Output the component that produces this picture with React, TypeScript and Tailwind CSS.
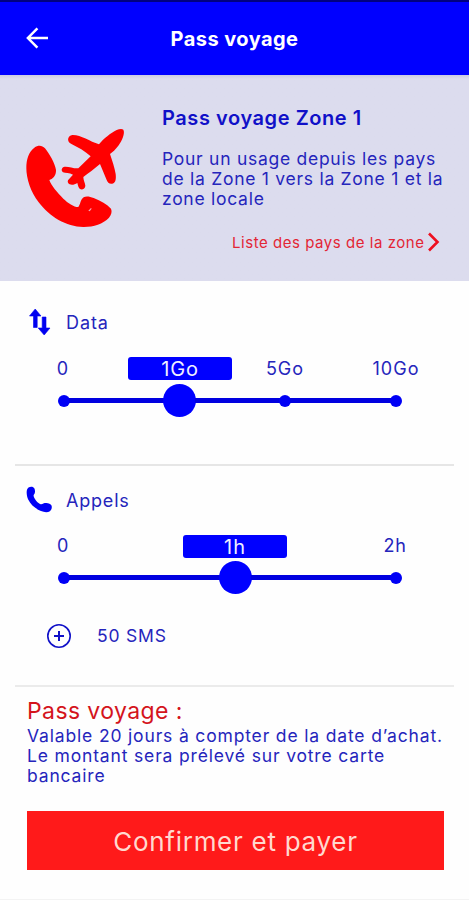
import React from "react";

function Knob() {
  return <span className="size-[33px] shrink-0 rounded-full bg-[#0000ff]" />;
}

function Dot() {
  return <span className="size-[12px] shrink-0 rounded-full bg-[#0000f5]" />;
}

function Track({ className }: { className: string }) {
  return <span className={`-mx-px h-[5px] shrink-0 bg-[#0000e0] ${className}`} />;
}

function Badge({ children, className }: { children: React.ReactNode; className: string }) {
  return (
    <span
      className={`flex h-[23px] w-[104px] shrink-0 items-center justify-center rounded-[3px] bg-[#0000ff] pt-[2px] text-[20px] leading-[23px] tracking-[0.9px] text-[#f0f0ff] ${className}`}
    >
      {children}
    </span>
  );
}

function PhonePlane() {
  return (
    <svg width="140" height="150" viewBox="0 0 420 450" className="block" fill="#ff0000">
      <path d="M73 143 C84 135 96 135 105 145 C118 162 135 189 138 210 C139 228 127 238 118 240 C124 257 142 278 160 296 C174 309 191 321 205 321 C212 312 211 299 221 292 C229 287 240 290 251 294 C272 302 291 313 303 326 C307 334 304 345 297 353 C279 372 251 380 222 381 C171 382 118 350 86 307 C62 276 49 235 49 204 C49 178 56 155 73 143 Z" />
      <path d="M235 332 L243 324 L245 326 L239 334 Z" fill="#f6a6b8" />
      <path d="M340 89 C346 99 336 123 325 137 C317 148 307 157 300 162 C307 184 314 203 317 222 C319 240 316 250 306 251 C297 252 293 247 290 240 L270 192 C253 207 235 219 220 231 C220 240 225 249 226 257 C226 265 219 269 212 268 C206 266 204 257 202 249 C194 254 186 256 179 253 C171 248 172 241 178 236 L189 224 C178 219 166 219 159 217 C152 211 155 201 164 200 C177 199 190 206 205 205 L242 169 C226 153 203 141 183 131 C169 124 173 107 187 105 C212 104 239 124 267 133 C281 116 302 99 320 90 C328 87 336 86 340 89 Z" />
    </svg>
  );
}

export default function App() {
  return (
    <main className="flex h-[900px] w-[469px] flex-col overflow-hidden bg-[#fefefe] font-['Inter','Liberation_Sans',sans-serif] text-[#2525bc]">
      <header className="grid h-[75px] shrink-0 grid-cols-[76px_1fr_76px] items-center border-t-2 border-[#000080] bg-[#0000ff] text-white">
        <svg width="24" height="24" viewBox="0 0 24 24" className="mb-[2px] ml-[25px]" fill="none" stroke="currentColor" strokeWidth="2.5">
          <path d="M12.4 2.3 L2.9 12 L12.4 21.7 M3 12 H23" />
        </svg>
        <h1 className="text-center text-[20px] leading-6 font-bold tracking-[0.45px]">Pass voyage</h1>
      </header>

      <section className="flex h-[206px] shrink-0 bg-[#dcdcee] bg-linear-to-b from-[#cbcbe2] to-[#dcdcee] to-[4px]">
        <div className="w-[162px] pt-[25px] pl-[10px]">
          <PhonePlane />
        </div>
        <div className="flex-1 pt-[31px]">
          <h2 className="text-[20px] leading-6 font-semibold tracking-[0.57px] whitespace-nowrap text-[#1010c8]">Pass voyage Zone 1</h2>
          <p className="mt-[19px] text-[17.5px] leading-5 tracking-[0.73px] whitespace-nowrap">
            Pour un usage depuis les pays
            <br />
            de la Zone 1 vers la Zone 1 et la
            <br />
            zone locale
          </p>
          <a className="mt-[24px] ml-[70px] flex h-5 items-center text-[15px] leading-5 tracking-[0.54px] whitespace-nowrap text-[#e32635]">
            Liste des pays de la zone
            <svg width="14" height="20" viewBox="0 0 14 20" className="mb-[2px] ml-[2px]" fill="none" stroke="#ee1020" strokeWidth="2.6">
              <path d="M2 1.5 L10.5 10 L2 18.5" />
            </svg>
          </a>
        </div>
      </section>

      <section className="mx-[15px] h-[185px] shrink-0 border-b-2 border-[#e6e6e6] pt-[26px]">
        <div className="flex h-[30px] items-center">
          <svg width="22" height="28" viewBox="0 0 22 28" className="ml-[14px]" fill="#0000f0">
            <path d="M6.2 1 L12 8 H8.2 V19.5 H4.5 V8 H.5 Z M13.2 9 H17 V20 H21 L15.2 27 L9.2 20 H13.2 Z" stroke="#0000f0" strokeWidth=".6" strokeLinejoin="round" />
          </svg>
          <span className="ml-[15px] pt-[2px] text-[18px] leading-6 tracking-[0.9px]">Data</span>
        </div>
        <div className="mt-[20px] flex h-[24px] items-center text-[18px] leading-6 tracking-[1px]">
          <span className="ml-[28px] w-10 text-center">0</span>
          <Badge className="mb-[2px] ml-[45px]">1Go</Badge>
          <span className="ml-[13px] w-20 text-center">5Go</span>
          <span className="ml-[41px] w-[60px] text-center">10Go</span>
        </div>
        <div className="mt-[3px] ml-[43px] flex h-[33px] items-center">
          <Dot />
          <Track className="w-[95px]" />
          <Knob />
          <Track className="w-[85px]" />
          <Dot />
          <Track className="w-[101px]" />
          <Dot />
        </div>
      </section>

      <section className="mx-[15px] h-[221px] shrink-0 border-b-2 border-[#ebebeb] pt-[19px]">
        <div className="flex h-[30px] items-center">
          <svg width="28" height="28" viewBox="0 0 28 28" className="ml-[10px]" fill="#0000f5">
            <path d="M3.5 1.5 C5.5 .2 8.5 .5 9.3 2.3 C10.4 4.5 10.2 7.2 9 8.6 C8.2 9.7 8.6 10.9 9.8 12.7 C11.3 15 13 17 15 18 C17 18.8 18 17.6 19.8 17.1 C22.5 16.5 25.6 17.6 26.5 19.6 C27.3 21.6 26.4 24 24.9 25.2 C22.6 26.9 19 26.4 16 25.1 C10.2 22.7 5.5 18.6 3.2 13.6 C1.5 9.8 .7 3.6 3.5 1.5 Z" />
          </svg>
          <span className="ml-[13px] pt-[2px] text-[18px] leading-6 tracking-[0.8px]">Appels</span>
        </div>
        <div className="mt-[19px] flex h-[24px] items-center text-[18px] leading-6 tracking-[0.8px]">
          <span className="ml-[28px] w-10 text-center">0</span>
          <Badge className="ml-[100px]">1h</Badge>
          <span className="ml-[78px] w-[60px] text-center">2h</span>
        </div>
        <div className="mt-[3px] ml-[43px] flex h-[33px] items-center">
          <Dot />
          <Track className="w-[151px]" />
          <Knob />
          <Track className="w-[140px]" />
          <Dot />
        </div>
        <div className="mt-[27px] flex h-[30px] items-center">
          <svg width="26" height="26" viewBox="0 0 26 26" className="ml-[31px]" fill="none" stroke="#1010c8">
            <circle cx="13" cy="13" r="11.2" strokeWidth="1.6" />
            <path d="M8 13 H18 M13 8 V18" strokeWidth="2" />
          </svg>
          <span className="ml-[25px] text-[17.5px] leading-6 tracking-[0.8px]">50 SMS</span>
        </div>
      </section>

      <section className="mx-[27px] shrink-0 pt-[10px]">
        <h3 className="text-[23px] leading-[29px] tracking-[0.4px] text-[#d4141c]">Pass voyage :</h3>
        <p className="text-[17.5px] leading-5 tracking-[0.84px] whitespace-nowrap">
          Valable 20 jours à compter de la date d’achat.
          <br />
          Le montant sera prélevé sur votre carte
          <br />
          bancaire
        </p>
        <button className="mt-[25px] block h-[59px] w-[417px] bg-[#ff1a1a] pt-[3px] text-[26px] leading-8 tracking-[0.72px] text-[#ffd9cf]">
          Confirmer et payer
        </button>
      </section>
      <div className="mt-auto h-px shrink-0 bg-[#f3f3f3]" />
    </main>
  );
}
